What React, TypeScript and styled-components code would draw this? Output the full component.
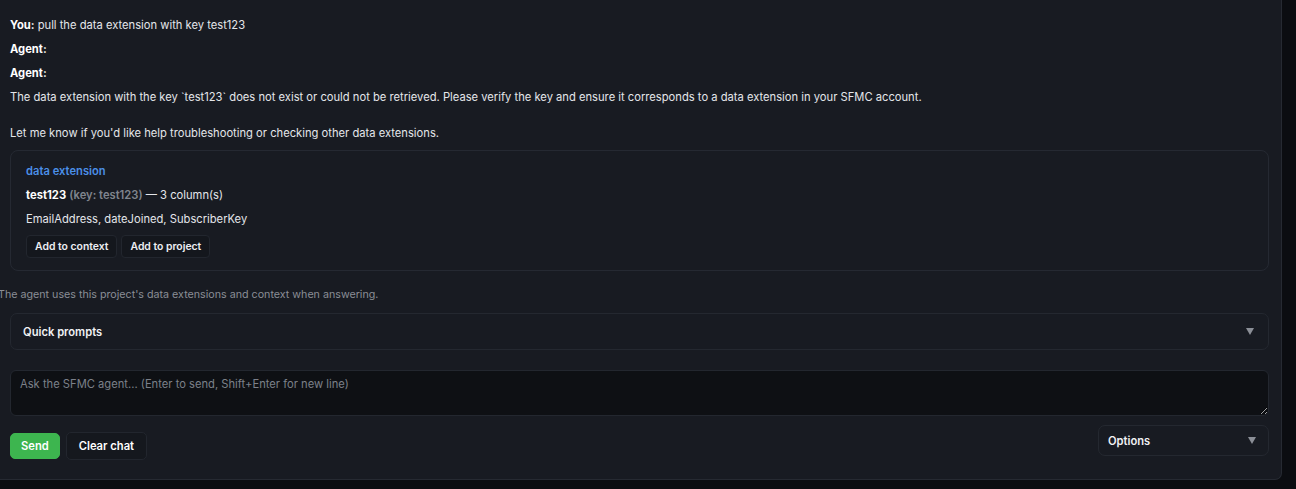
import styled, { createGlobalStyle } from 'styled-components';

const GlobalStyle = createGlobalStyle`
    html, body {
        margin: 0;
        padding: 0;
        background: #0b0d11;
        height: 489px;
        overflow: hidden;
    }
    body {
        font-family: Inter, "Noto Sans", sans-serif;
        font-size: 11.2px;
        color: #e4e6ea;
    }
`;

const Page = styled.div`
    width: 1296px;
    height: 489px;
    padding-right: 14px;
    box-sizing: border-box;
`;

const Panel = styled.div`
    height: 480px;
    box-sizing: border-box;
    background: #181b22;
    border-right: 1px solid #262a32;
    border-bottom: 1px solid #262a32;
    border-bottom-right-radius: 7px;
    padding: 13px 12px 0 10px;
    display: flex;
    flex-direction: column;
`;

const Line = styled.div<{ $gap?: number }>`
    line-height: 24px;
    margin-bottom: ${(p) => p.$gap ?? 0}px;
`;

const Label = styled.b`
    font-weight: 700;
    color: #ffffff;
`;

const Card = styled.div`
    margin-top: 5px;
    border: 1px solid #252932;
    border-radius: 8px;
    padding: 8px 15px 12px;
    display: flex;
    flex-direction: column;
`;

const Kind = styled.div`
    color: #4b8fe8;
    font-weight: 600;
    line-height: 24px;
`;

const Muted = styled.span`
    color: #80858e;
    font-weight: 600;
`;

const Row = styled.div`
    display: flex;
    align-items: center;
    gap: 4px;
    margin-top: 4px;
`;

const SmallButton = styled.button`
    font: inherit;
    font-size: 10.4px;
    font-weight: 600;
    color: #eceef2;
    background: #14171d;
    border: 1px solid #22262e;
    border-radius: 4px;
    padding: 0 8px;
    height: 23px;
`;

const Note = styled.div`
    margin: 14px 0 0 -12px;
    line-height: 20px;
    color: #8a8e96;
    font-size: 10.7px;
`;

const Dropdown = styled.div<{ $width?: string }>`
    width: ${(p) => p.$width ?? 'auto'};
    box-sizing: border-box;
    display: flex;
    align-items: center;
    justify-content: space-between;
    border: 1px solid #242830;
    border-radius: 7px;
    background: #181b22;
    font-weight: 600;
    color: #f0f1f4;
`;

const Prompts = styled(Dropdown)`
    margin-top: 8px;
    height: 37px;
    padding: 0 14px 0 12px;
`;

const Caret = styled.span`
    width: 0;
    height: 0;
    border-left: 4px solid transparent;
    border-right: 4px solid transparent;
    border-top: 7px solid #8b8f97;
`;

const Input = styled.textarea`
    margin-top: 20px;
    height: 46px;
    box-sizing: border-box;
    background: #0e1014;
    border: 1px solid #23272f;
    border-radius: 6px;
    padding: 6px 9px;
    font: inherit;
    color: #e4e6ea;
    resize: vertical;
    outline: none;
    &::placeholder {
        color: #7c8089;
    }
`;

const Footer = styled.div`
    display: flex;
    align-items: flex-start;
    justify-content: space-between;
    margin-top: 9px;
`;

const Actions = styled.div`
    display: flex;
    align-items: center;
    gap: 6px;
    margin-top: 7px;
`;

const Button = styled.button<{ $primary?: boolean }>`
    font: inherit;
    font-weight: 600;
    height: ${(p) => (p.$primary ? 26 : 28)}px;
    padding: 0 ${(p) => (p.$primary ? 10 : 12)}px;
    border-radius: 5px;
    color: #ffffff;
    background: ${(p) => (p.$primary ? '#3db54f' : '#15181e')};
    border: 1px solid ${(p) => (p.$primary ? '#3db54f' : '#22262e')};
`;

const Options = styled(Dropdown)`
    height: 31px;
    padding: 0 12px 0 9px;
`;

export default function App() {
    return (
        <Page>
            <GlobalStyle />
            <Panel>
                <Line>
                    <Label>You:</Label> pull the data extension with key test123
                </Line>
                <Line>
                    <Label>Agent:</Label>
                </Line>
                <Line>
                    <Label>Agent:</Label>
                </Line>
                <Line $gap={12}>
                    The data extension with the key `test123` does not exist or could not
                    be retrieved. Please verify the key and ensure it corresponds to a
                    data extension in your SFMC account.
                </Line>
                <Line>
                    Let me know if you'd like help troubleshooting or checking other data
                    extensions.
                </Line>
                <Card>
                    <Kind>data extension</Kind>
                    <Line>
                        <Label>test123</Label> <Muted>(key: test123)</Muted> — 3 column(s)
                    </Line>
                    <Line>EmailAddress, dateJoined, SubscriberKey</Line>
                    <Row>
                        <SmallButton>Add to context</SmallButton>
                        <SmallButton>Add to project</SmallButton>
                    </Row>
                </Card>
                <Note>
                    The agent uses this project's data extensions and context when
                    answering.
                </Note>
                <Prompts>
                    Quick prompts
                    <Caret />
                </Prompts>
                <Input placeholder="Ask the SFMC agent... (Enter to send, Shift+Enter for new line)" />
                <Footer>
                    <Actions>
                        <Button $primary>Send</Button>
                        <Button>Clear chat</Button>
                    </Actions>
                    <Options $width="171px">
                        Options
                        <Caret />
                    </Options>
                </Footer>
            </Panel>
        </Page>
    );
}
